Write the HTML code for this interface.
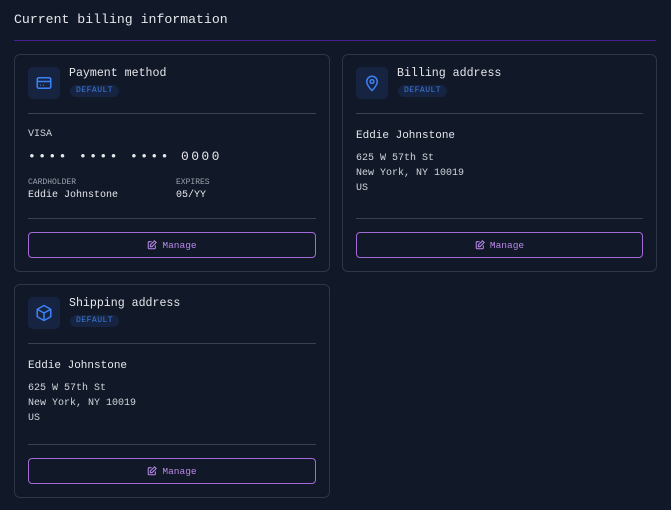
<!DOCTYPE html>
<html><head><style>
*{margin:0;padding:0;box-sizing:border-box}
body{width:671px;height:510px;background:#111827;font-family:"Liberation Mono",monospace;color:#e5e7eb;position:relative;overflow:hidden}
.a{position:absolute;white-space:nowrap}
h1{position:absolute;left:14px;top:12px;font-size:13.2px;font-weight:normal;color:#e5e7eb}
.hr{position:absolute;left:14px;width:642px;top:40px;height:1px;background:#4c1d95}
.card{position:absolute;border:1px solid #2d3748;border-radius:6px;background:#111827}
.ib{position:absolute;left:13px;top:12px;width:32px;height:32px;border-radius:5px;background:#172441;display:flex;align-items:center;justify-content:center}
.t{position:absolute;left:54px;top:12px;font-size:11.6px;color:#e5e7eb}
.bd{position:absolute;left:55px;top:30px;height:12px;padding:0 6px;border-radius:6px;background:#172441;color:#3b7ae0;font-size:8px;line-height:12px;letter-spacing:.5px}
.dv{position:absolute;left:13px;right:13px;height:1px;background:#374151}
.btn{position:absolute;left:13px;right:13px;height:26px;border:1px solid #a46ad8;border-radius:4px;color:#b888e8;font-size:9.5px;display:flex;align-items:center;justify-content:center;gap:5px}
.s{font-size:10px;color:#d1d5db}
.sm{font-size:8px;color:#9ca3af}
.n{font-size:11px;color:#e5e7eb}
</style></head><body>
<h1>Current billing information</h1>
<div class="hr"></div>

<div class="card" style="left:14px;top:54px;width:316px;height:218px">
 <div class="ib"><svg width="18" height="18" viewBox="0 0 24 24" fill="none" stroke="#3b82f6" stroke-width="2"><rect x="3" y="5" width="18" height="14" rx="2"/><path d="M3 10h18M7 15h1M11 15h1"/></svg></div>
 <div class="t">Payment method</div>
 <div class="bd">DEFAULT</div>
 <div class="dv" style="top:58px"></div>
 <div class="a s" style="left:13px;top:74px">VISA</div>
 <div class="a" style="left:13px;top:94px;font-size:13px;letter-spacing:2.4px;color:#e5e7eb">•••• •••• •••• 0000</div>
 <div class="a sm" style="left:13px;top:123px">CARDHOLDER</div>
 <div class="a s" style="left:13px;top:135px;color:#e5e7eb">Eddie Johnstone</div>
 <div class="a sm" style="left:161px;top:123px">EXPIRES</div>
 <div class="a s" style="left:161px;top:135px;color:#e5e7eb">05/YY</div>
 <div class="dv" style="top:163px"></div>
 <div class="btn" style="top:177px"><svg width="10" height="10" viewBox="0 0 24 24" fill="none" stroke="#b888e8" stroke-width="2.5"><path d="M11 4H5a2 2 0 0 0-2 2v13a2 2 0 0 0 2 2h13a2 2 0 0 0 2-2v-6"/><path d="M18 2l4 4-10 10H8v-4z"/></svg>Manage</div>
</div>

<div class="card" style="left:342px;top:54px;width:315px;height:218px">
 <div class="ib"><svg width="18" height="18" viewBox="0 0 24 24" fill="none" stroke="#3b82f6" stroke-width="2"><path d="M12 22s7-6.5 7-12a7 7 0 0 0-14 0c0 5.5 7 12 7 12z"/><circle cx="12" cy="10" r="2.5"/></svg></div>
 <div class="t">Billing address</div>
 <div class="bd">DEFAULT</div>
 <div class="dv" style="top:58px"></div>
 <div class="a n" style="left:13px;top:75px">Eddie Johnstone</div>
 <div class="a s" style="left:13px;top:98px">625 W 57th St</div>
 <div class="a s" style="left:13px;top:113px">New York, NY 10019</div>
 <div class="a s" style="left:13px;top:128px">US</div>
 <div class="dv" style="top:163px"></div>
 <div class="btn" style="top:177px"><svg width="10" height="10" viewBox="0 0 24 24" fill="none" stroke="#b888e8" stroke-width="2.5"><path d="M11 4H5a2 2 0 0 0-2 2v13a2 2 0 0 0 2 2h13a2 2 0 0 0 2-2v-6"/><path d="M18 2l4 4-10 10H8v-4z"/></svg>Manage</div>
</div>

<div class="card" style="left:14px;top:284px;width:316px;height:214px">
 <div class="ib"><svg width="18" height="18" viewBox="0 0 24 24" fill="none" stroke="#3b82f6" stroke-width="2" stroke-linejoin="round"><path d="M12 2l9 5v10l-9 5-9-5V7z"/><path d="M3 7l9 5 9-5M12 12v10"/></svg></div>
 <div class="t">Shipping address</div>
 <div class="bd">DEFAULT</div>
 <div class="dv" style="top:58px"></div>
 <div class="a n" style="left:13px;top:75px">Eddie Johnstone</div>
 <div class="a s" style="left:13px;top:98px">625 W 57th St</div>
 <div class="a s" style="left:13px;top:113px">New York, NY 10019</div>
 <div class="a s" style="left:13px;top:128px">US</div>
 <div class="dv" style="top:159px"></div>
 <div class="btn" style="top:173px"><svg width="10" height="10" viewBox="0 0 24 24" fill="none" stroke="#b888e8" stroke-width="2.5"><path d="M11 4H5a2 2 0 0 0-2 2v13a2 2 0 0 0 2 2h13a2 2 0 0 0 2-2v-6"/><path d="M18 2l4 4-10 10H8v-4z"/></svg>Manage</div>
</div>
</body></html>
